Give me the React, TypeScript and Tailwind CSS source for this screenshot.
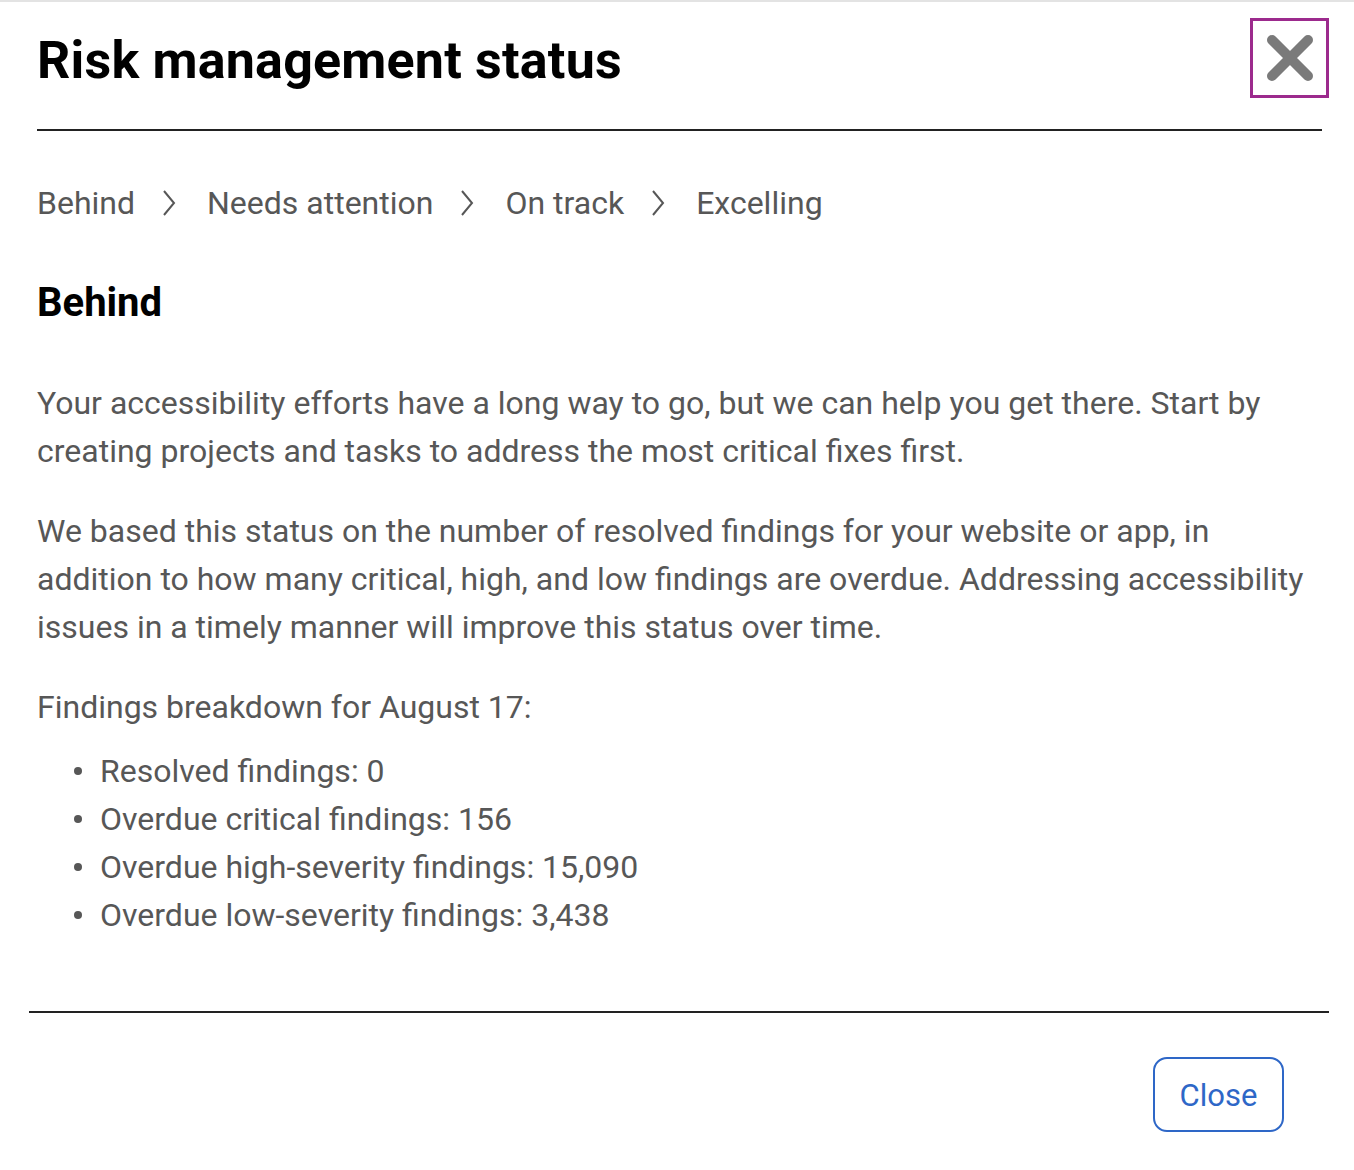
import React from "react";

export default function App() {
  const body = { fontFamily: "Roboto, 'Liberation Sans', sans-serif" };
  return (
    <div className="w-[1354px] h-[1170px] bg-white border-t-2 border-[#e3e3e3] relative" style={body}>
      <div className="flex items-start justify-between pl-[37px] pr-[25px] pt-[16px]">
        <h1 className="text-[52px] leading-[86px] font-bold text-black tracking-[0.2px]" style={{ fontFamily: "Roboto, sans-serif" }}>
          Risk management status
        </h1>
        <button className="w-[79px] h-[80px] border-[3px] border-[#9c2a8d] flex items-center justify-center">
          <svg width="48" height="48" viewBox="0 0 48 48">
            <path d="M6 6 L42 42 M42 6 L6 42" stroke="#7a7a7a" strokeWidth="10" strokeLinecap="round" />
          </svg>
        </button>
      </div>
      <div className="mx-[37px] mr-[32px] mt-[25px] h-[2px] bg-[#222]" />
      <div className="pl-[37px] pr-[40px]">
        <nav className="flex items-center mt-[48px] text-[32px] leading-[48px] text-[#575757]">
          <span>Behind</span>
          <Chevron />
          <span>Needs attention</span>
          <Chevron />
          <span>On track</span>
          <Chevron />
          <span>Excelling</span>
        </nav>
        <h2 className="mt-[52px] text-[40px] leading-[48px] font-bold text-black">Behind</h2>
        <p className="mt-[52px] text-[32px] leading-[48px] text-[#575757]">
          Your accessibility efforts have a long way to go, but we can help you get there. Start by creating projects and tasks to address the most critical fixes first.
        </p>
        <p className="mt-[32px] text-[32px] leading-[48px] text-[#575757]">
          We based this status on the number of resolved findings for your website or app, in addition to how many critical, high, and low findings are overdue. Addressing accessibility issues in a timely manner will improve this status over time.
        </p>
        <p className="mt-[32px] text-[32px] leading-[48px] text-[#575757]">Findings breakdown for August 17:</p>
        <ul className="mt-[16px] text-[32px] leading-[48px] text-[#575757]">
          {[
            "Resolved findings: 0",
            "Overdue critical findings: 156",
            "Overdue high-severity findings: 15,090",
            "Overdue low-severity findings: 3,438",
          ].map((t) => (
            <li key={t} className="flex items-center">
              <span className="w-[8px] h-[8px] rounded-full bg-[#575757] ml-[37px] mr-[18px]" />
              <span>{t}</span>
            </li>
          ))}
        </ul>
      </div>
      <div className="ml-[29px] mr-[25px] mt-[72px] h-[2px] bg-[#222]" />
      <div className="flex justify-end pr-[70px] mt-[44px]">
        <button className="w-[131px] h-[75px] rounded-[14px] border-2 border-[#2e67c7] text-[#2e67c7] text-[31px] pt-[3px]">
          Close
        </button>
      </div>
    </div>
  );
}

function Chevron() {
  return (
    <svg className="ml-[25px] mr-[29px]" width="18" height="30" viewBox="0 0 18 30">
      <path d="M4 3 L14 15 L4 27" stroke="#575757" strokeWidth="2" fill="none" />
    </svg>
  );
}
